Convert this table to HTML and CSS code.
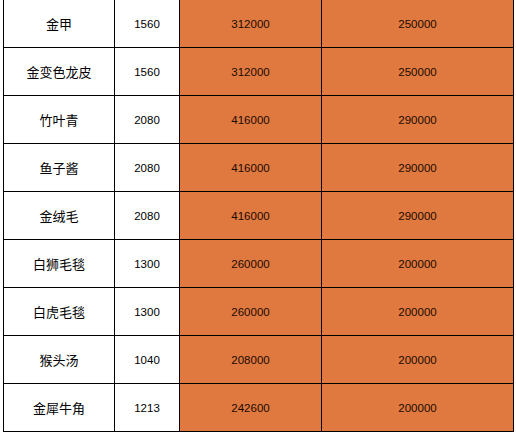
FILE: index.html
```html
<!DOCTYPE html>
<html>
<head>
<meta charset="utf-8">
<link rel="stylesheet" href="styles.css">
</head>
<body>
<div class="sheet">
  <div class="c name">金甲</div><div class="c num">1560</div><div class="c o">312000</div><div class="c o">250000</div>
  <div class="c name">金变色龙皮</div><div class="c num">1560</div><div class="c o">312000</div><div class="c o">250000</div>
  <div class="c name">竹叶青</div><div class="c num">2080</div><div class="c o">416000</div><div class="c o">290000</div>
  <div class="c name">鱼子酱</div><div class="c num">2080</div><div class="c o">416000</div><div class="c o">290000</div>
  <div class="c name">金绒毛</div><div class="c num">2080</div><div class="c o">416000</div><div class="c o">290000</div>
  <div class="c name">白狮毛毯</div><div class="c num">1300</div><div class="c o">260000</div><div class="c o">200000</div>
  <div class="c name">白虎毛毯</div><div class="c num">1300</div><div class="c o">260000</div><div class="c o">200000</div>
  <div class="c name">猴头汤</div><div class="c num">1040</div><div class="c o">208000</div><div class="c o">200000</div>
  <div class="c name">金犀牛角</div><div class="c num">1213</div><div class="c o">242600</div><div class="c o">200000</div>
</div>
</body>
</html>
```
FILE: styles.css
```css
html, body {
  margin: 0;
  padding: 0;
  background: #fff;
}
.sheet {
  display: grid;
  grid-template-columns: 110px 64px 141px 191px;
  grid-auto-rows: 47px;
  gap: 1px;
  background: #000;
  border: 1px solid #000;
  border-top: none;
  margin-left: 3px;
  width: max-content;
}
.c {
  display: flex;
  align-items: center;
  justify-content: center;
  background: #fff;
  color: #000;
  font-family: "Liberation Sans", "Noto Sans CJK SC", sans-serif;
  font-size: 11.5px;
}
.name {
  font-family: "Noto Sans CJK SC", sans-serif;
  font-size: 13px;
}
.o {
  background: #e0793f;
  color: #1a0a00;
}
```
